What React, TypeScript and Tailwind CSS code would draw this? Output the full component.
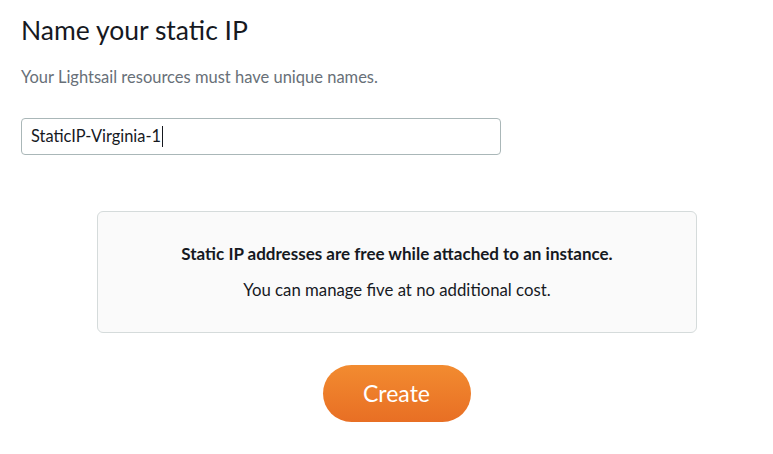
export default function App() {
  return (
    <div className="w-[773px] h-[454px] bg-white font-['Lato',sans-serif] overflow-hidden">
      <div className="pl-[21px] pt-[14px]">
        <h1 className="text-[26.5px] leading-[32px] font-normal text-[#16191f]">Name your static IP</h1>
        <p className="mt-[21px] text-[16.5px] leading-[20px] text-[#687078]">
          Your Lightsail resources must have unique names.
        </p>
        <div className="mt-[31px] w-[480px] h-[37px] border border-[#aab7b8] rounded-[4px] flex items-center px-[9px]">
          <span className="text-[16.4px] text-[#16191f]">StaticIP-Virginia-1</span>
          <span className="w-px h-[21px] bg-[#16191f] ml-px" />
        </div>
      </div>
      <div className="mt-[56px] ml-[97px] w-[600px] h-[122px] bg-[#fafafa] border border-[#d5dbdb] rounded-[6px] flex flex-col items-center justify-center gap-[16px]">
        <p className="text-[17px] leading-[20px] font-bold text-[#16191f]">
          Static IP addresses are free while attached to an instance.
        </p>
        <p className="text-[16.75px] leading-[20px] text-[#16191f]">You can manage five at no additional cost.</p>
      </div>
      <div className="flex justify-center ml-[20px] mt-[32px]">
        <button className="w-[148px] h-[57px] rounded-full bg-gradient-to-b from-[#f28b30] to-[#e86f24] text-white text-[23px]">
          Create
        </button>
      </div>
    </div>
  );
}
